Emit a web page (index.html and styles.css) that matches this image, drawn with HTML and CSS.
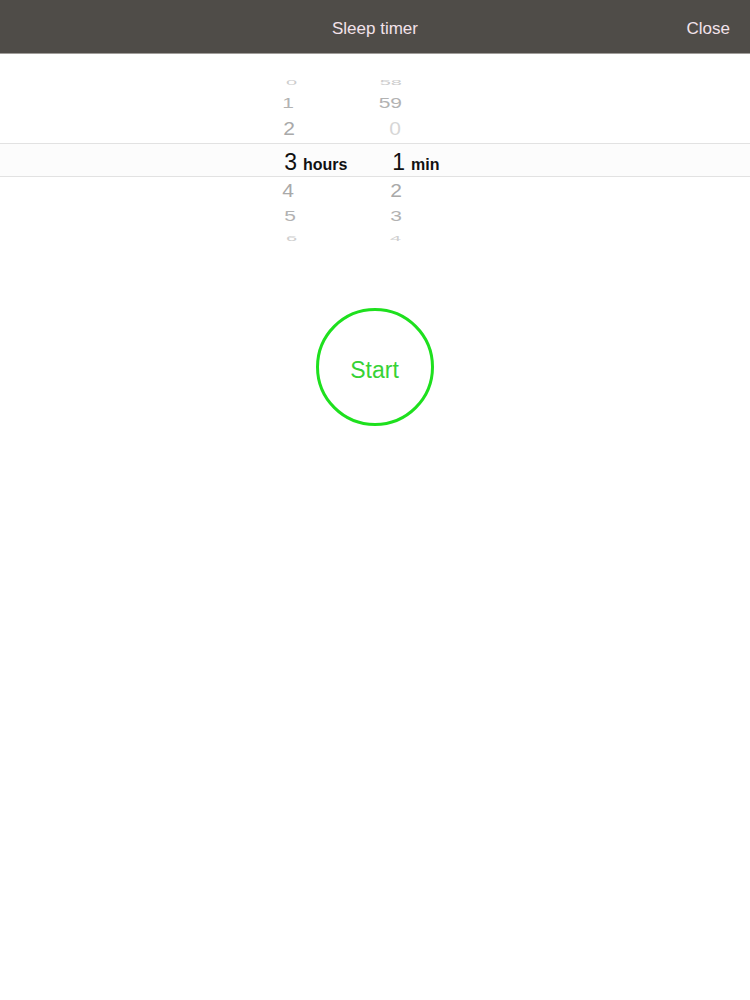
FILE: index.html
```html
<!DOCTYPE html>
<html>
<head>
<meta charset="utf-8">
<link rel="stylesheet" href="styles.css">
</head>
<body>
<header class="bar">
  <div class="bar-title">Sleep timer</div>
  <div class="bar-close">Close</div>
</header>
<main class="content">
  <div class="picker">
    <div class="row r0"><span class="h">0</span><span class="lab"></span><span class="m">58</span><span class="lab"></span></div>
    <div class="row r1"><span class="h">1</span><span class="lab"></span><span class="m">59</span><span class="lab"></span></div>
    <div class="row r2"><span class="h">2</span><span class="lab"></span><span class="m">0</span><span class="lab"></span></div>
    <div class="row sel"><span class="h">3</span><span class="lab">hours</span><span class="m">1</span><span class="lab">min</span></div>
    <div class="row r4"><span class="h">4</span><span class="lab"></span><span class="m">2</span><span class="lab"></span></div>
    <div class="row r5"><span class="h">5</span><span class="lab"></span><span class="m">3</span><span class="lab"></span></div>
    <div class="row r6"><span class="h">6</span><span class="lab"></span><span class="m">4</span><span class="lab"></span></div>
  </div>
  <div class="start-wrap">
    <div class="start">Start</div>
  </div>
</main>
</body>
</html>
```
FILE: styles.css
```css
html, body {
  margin: 0;
  padding: 0;
  background: #ffffff;
  font-family: "Liberation Sans", Arial, sans-serif;
}

.bar {
  height: 54px;
  background: #4f4c48;
  border-bottom: 1px solid #a09d9a;
  box-sizing: border-box;
  display: grid;
  grid-template-columns: 1fr auto 1fr;
  align-items: center;
  color: #f3e2ea;
  font-size: 17px;
  padding: 5px 20px 0 20px;
}

.bar-title {
  grid-column: 2;
}

.bar-close {
  grid-column: 3;
  justify-self: end;
}

.picker {
  padding-top: 17px;
  display: flex;
  flex-direction: column;
}

.row {
  display: grid;
  grid-template-columns: 262px 35px 68px 40px 1fr;
  align-items: center;
  box-sizing: border-box;
  color: #a8a8a8;
  font-size: 21px;
}

.row .h { grid-column: 2; text-align: right; display: block; }
.row .m { grid-column: 4; text-align: right; display: block; padding-right: 3px; }

.row .lab {
  font-weight: bold;
  font-size: 16px;
  color: #111;
}

.r0 { height: 20px; color: #cdcdcd; font-size: 20px; }
.r0 .h, .r0 .m { transform: scaleY(0.38); }
.r0 .h { padding-right: 0; }
.r1 { height: 24px; color: #b2b2b2; font-size: 21px; }
.r1 .h, .r1 .m { transform: scaleY(0.72); }
.r1 .h { padding-right: 3px; }
.r2 { height: 28px; color: #a9a9a9; font-size: 21px; }
.r2 .h, .r2 .m { transform: scaleY(0.87); }
.r2 .h { padding-right: 2px; }
.r2 .m { color: #d6d6d6; padding-right: 4px; }

.sel {
  height: 34px;
  border-top: 1px solid #e2e2e2;
  border-bottom: 1px solid #e2e2e2;
  background: #fcfcfc;
  color: #111;
  font-size: 23px;
  align-items: baseline;
  padding-top: 5px;
}
.sel .lab:nth-of-type(2) { padding-left: 6px; }
.sel .lab:nth-of-type(4) { padding-left: 6px; }
.sel .m { padding-right: 0; }

.r4 { height: 27px; color: #a9a9a9; font-size: 21px; }
.r4 .h, .r4 .m { transform: scaleY(0.87); }
.r4 .h { padding-right: 3px; }
.r5 { height: 23px; color: #b2b2b2; font-size: 21px; }
.r5 .h, .r5 .m { transform: scaleY(0.72); }
.r5 .h { padding-right: 1px; }
.r6 { height: 20px; color: #cfcfcf; font-size: 20px; }
.r6 .h, .r6 .m { transform: scaleY(0.34); }
.r6 .h { padding-right: 0; }
.r6 .m { padding-right: 4px; }

.start-wrap {
  display: flex;
  justify-content: center;
  padding-top: 61px;
}

.start {
  width: 118px;
  height: 118px;
  box-sizing: border-box;
  border: 3.5px solid #1ee01e;
  border-radius: 50%;
  display: flex;
  align-items: center;
  justify-content: center;
  padding-top: 6px;
  color: #36d236;
  font-size: 23px;
  margin-left: -1px;
}
```
